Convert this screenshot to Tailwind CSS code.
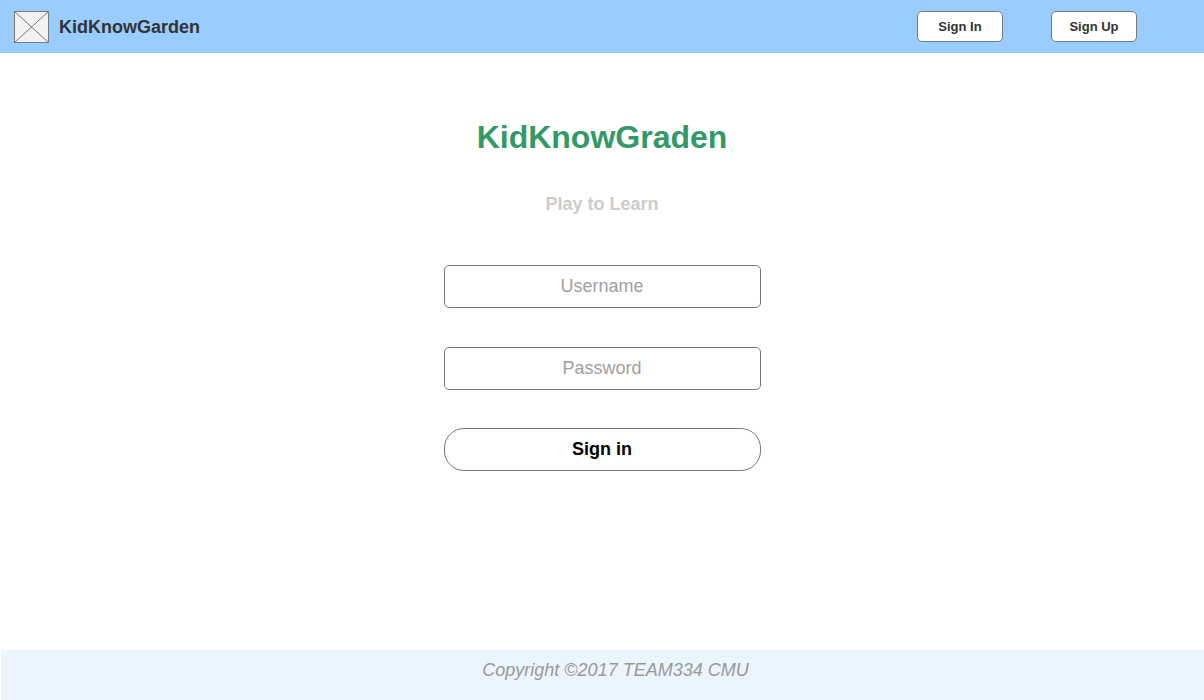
<!DOCTYPE html>
<html lang="en">
<head>
<meta charset="utf-8">
<meta name="viewport" content="width=device-width, initial-scale=1">
<title>KidKnowGarden</title>
<script src="https://cdn.jsdelivr.net/npm/@tailwindcss/browser@4"></script>
</head>
<body class="flex min-h-screen flex-col bg-white font-['Liberation_Sans',Arial,sans-serif]">
<header class="flex h-[53px] items-center justify-between bg-[#99ccff] pl-3.5 pr-[67px]">
  <div class="flex items-center gap-2.5">
    <svg class="h-8 w-[35px]" viewBox="0 0 35 32" fill="#f2f2f2" stroke="#797979" aria-hidden="true"><path d="M.5.5h34v31H.5zM.5.5l34 31M34.5.5l-34 31"/></svg>
    <span class="text-lg font-bold text-[#333333]">KidKnowGarden</span>
  </div>
  <nav class="flex gap-12">
    <button type="button" class="h-[31px] w-[86px] rounded-[5px] border border-[#797979] bg-white text-[13px] font-bold text-[#333333]">Sign In</button>
    <button type="button" class="h-[31px] w-[86px] rounded-[5px] border border-[#797979] bg-white text-[13px] font-bold text-[#333333]">Sign Up</button>
  </nav>
</header>
<main class="flex grow flex-col items-center px-4 pt-16">
  <h1 class="text-[32px] leading-10 font-bold text-[#339966]">KidKnowGraden</h1>
  <p class="mt-8 text-lg leading-[30px] font-bold text-[#cccccc]">Play to Learn</p>
  <form class="mt-[46px] flex w-full max-w-[317px] flex-col">
    <div class="flex flex-col gap-[39px]">
      <input type="text" aria-label="Username" placeholder="Username" class="h-[43px] rounded-[5px] border border-[#797979] text-center text-lg text-black placeholder:text-[#a0a0a0]">
      <input type="password" aria-label="Password" placeholder="Password" class="h-[43px] rounded-[5px] border border-[#797979] text-center text-lg text-black placeholder:text-[#a0a0a0]">
    </div>
    <button type="button" class="mt-[38px] h-[43px] rounded-[20px] border border-[#797979] bg-white pb-0.5 text-lg font-bold text-black">Sign in</button>
  </form>
</main>
<footer class="ml-px h-[50px] bg-[#eaf5ff] pt-1.5 pl-[26px] text-center text-lg text-[#999999] italic">Copyright ©2017 TEAM334 CMU</footer>
</body>
</html>
